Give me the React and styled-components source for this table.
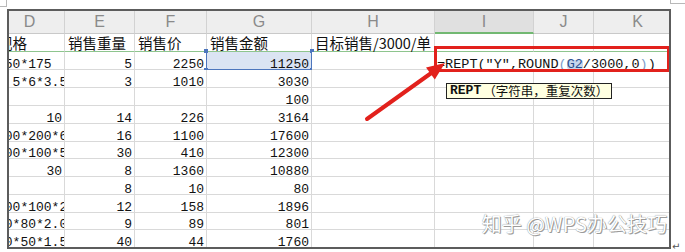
import React from "react";
import styled, { createGlobalStyle } from "styled-components";

const GlobalStyle = createGlobalStyle`
  html, body {
    margin: 0;
    padding: 0;
    background: #fff;
  }
  body {
    width: 685px;
    height: 252px;
    overflow: hidden;
  }
`;

const COLS = [
  { key: "D", w: 70 },
  { key: "E", w: 70 },
  { key: "F", w: 72 },
  { key: "G", w: 105 },
  { key: "H", w: 123 },
  { key: "I", w: 99, active: true },
  { key: "J", w: 60 },
  { key: "K", w: 88 },
];
const template = COLS.map((c) => c.w + "px").join(" ");

const titles = ["规格", "销售重量", "销售价", "销售金额", "目标销售/3000/单", "", "", ""];

const rows = [
  { h: 18, d: "150*175", e: 5, f: 2250, g: 11250, sel: true, formula: true },
  { h: 18, d: "  5*6*3.5", e: 3, f: 1010, g: 3030 },
  { h: 18, g: 100 },
  { h: 18, d: 10, e: 14, f: 226, g: 3164 },
  { h: 18, d: "100*200*6", e: 16, f: 1100, g: 17600 },
  { h: 17, d: "100*100*5", e: 30, f: 410, g: 12300 },
  { h: 18, d: 30, e: 8, f: 1360, g: 10880 },
  { h: 18, e: 8, f: 10, g: 80 },
  { h: 18, d: "100*100*2", e: 12, f: 158, g: 1896 },
  { h: 17, d: "80*80*2.0", e: 9, f: 89, g: 801 },
  { h: 18, d: "50*50*1.5", e: 40, f: 44, g: 1760 },
];

const Page = styled.div`
  width: 685px;
  height: 252px;
  background: #fff;
`;

const TopStrip = styled.div`
  height: 9px;
  display: flex;
  justify-content: space-between;
  align-items: flex-start;
`;

const CornerMark = styled.span`
  box-sizing: border-box;
  display: block;
  width: ${(p) => p.$w}px;
  height: ${(p) => p.$h}px;
  border-bottom: 1px solid #b8b8b8;
  ${(p) =>
    p.$side === "left"
      ? "border-right: 1px solid #b8b8b8;"
      : "border-left: 1px solid #b8b8b8;"}
`;

const FrameRow = styled.div`
  display: flex;
  align-items: flex-end;
  padding-left: 7px;
`;

const Frame = styled.div`
  position: relative;
  box-sizing: border-box;
  width: 664px;
  height: 240px;
  border: 2px solid #5c5c5c;
  overflow: hidden;
  background: #fff;
`;

const ReturnMark = styled.span`
  font-family: "DejaVu Sans", sans-serif;
  font-size: 10px;
  line-height: 10px;
  color: #555;
  margin-left: 1px;
  margin-bottom: -3px;
`;

const Sheet = styled.div`
  margin-left: -14px;
  width: max-content;
`;

const Row = styled.div`
  display: grid;
  grid-template-columns: ${template};
  height: ${(p) => p.$h}px;
`;

const HeadCell = styled.div`
  box-sizing: border-box;
  border-right: 1px solid #d2d2d2;
  border-bottom: ${(p) =>
    p.$active ? "2px solid #72b872" : "1px solid #c9c9c9"};
  background: ${(p) => (p.$active ? "#e0e0e0" : "#eeeeee")};
  display: flex;
  align-items: center;
  justify-content: center;
  font-family: "Liberation Sans", Arial, sans-serif;
  font-size: 16px;
  color: #8a8a8a;
`;

const TitleCell = styled.div`
  box-sizing: border-box;
  border-right: 1px solid #d9d9d9;
  border-bottom: 1px solid #8ec58e;
  padding-left: 3px;
  overflow: ${(p) => (p.$clip ? "hidden" : "visible")};
  white-space: nowrap;
  font-family: "Noto Sans CJK SC", sans-serif;
  font-size: 14.5px;
  line-height: 17px;
  color: #111;
`;

const Cell = styled.div`
  position: relative;
  box-sizing: border-box;
  border-right: 1px solid #d9d9d9;
  border-bottom: 1px solid #d9d9d9;
  padding: 0 2px;
  overflow: ${(p) => (p.$clip ? "hidden" : "visible")};
  white-space: pre;
  display: flex;
  align-items: flex-end;
  justify-content: ${(p) => (p.$num ? "flex-end" : "flex-start")};
  font-family: "Liberation Mono", monospace;
  font-size: 13px;
  line-height: 9px;
  color: #111;
  background: ${(p) => (p.$sel ? "#dbe4f3" : "#fff")};
`;

const EditCell = styled(Cell)`
  grid-column: span 3;
  z-index: 2;
  background: #fff;
  border-right: none;
  font-size: 13.5px;
`;

const SelFrame = styled.span`
  position: absolute;
  left: -1px;
  top: -1px;
  right: -1px;
  bottom: -1px;
  border: 1px solid #4d76bd;
  border-top-color: transparent;
  pointer-events: none;
`;

const Handle = styled.span`
  position: absolute;
  width: 4px;
  height: 4px;
  background: #4d76bd;
  ${(p) => (p.$x === "left" ? "left: -3px;" : "right: -3px;")}
  ${(p) => (p.$y === "top" ? "top: -3px;" : "bottom: -3px;")}
`;

const Paren = styled.span`
  color: #7d9bc9;
`;

const RefTag = styled.span`
  background: #c6d5ec;
  color: #2d4f8e;
  border-radius: 2px;
`;

const RedBox = styled.span`
  position: absolute;
  left: -1px;
  top: -6px;
  width: 236px;
  height: 26px;
  box-sizing: border-box;
  border: 3px solid #e2211c;
  pointer-events: none;
`;

const Tip = styled.div`
  position: absolute;
  left: 11px;
  top: 31px;
  box-sizing: border-box;
  height: 16px;
  padding: 0 3px;
  border: 1px solid #222;
  background: #ffffe1;
  display: flex;
  align-items: center;
  white-space: nowrap;
  font-family: "Noto Sans CJK SC", sans-serif;
  font-size: 12.5px;
  line-height: 14px;
  color: #111;
`;

const TipName = styled.b`
  font-family: "Liberation Mono", monospace;
  font-size: 13px;
  margin-right: 2px;
`;

const Arrow = styled.svg`
  position: absolute;
  left: 350px;
  top: 44px;
  overflow: visible;
  z-index: 3;
  pointer-events: none;
`;

const Watermark = styled.div`
  position: absolute;
  right: 2px;
  bottom: 12px;
  font-family: "Noto Sans CJK SC", sans-serif;
  font-size: 20px;
  line-height: 22px;
  color: #fff;
  white-space: nowrap;
  text-shadow: 0 0 1px #6f6f6f, 1px 1px 0 #a0a0a0;
`;

const isNum = (v) => typeof v === "number";

const App = () => {
  return (
    <Page>
      <GlobalStyle />
      <TopStrip>
        <CornerMark $side="left" $w={7} $h={7} />
        <CornerMark $side="right" $w={15} $h={4} />
      </TopStrip>
      <FrameRow>
        <Frame>
          <Sheet>
            <Row $h={23}>
              {COLS.map((c) => (
                <HeadCell key={c.key} $active={c.active}>
                  {c.key}
                </HeadCell>
              ))}
            </Row>
            <Row $h={18}>
              {titles.map((t, i) => (
                <TitleCell key={i} $clip={i === 0}>
                  {t}
                </TitleCell>
              ))}
            </Row>
            {rows.map((r, i) => (
              <Row $h={r.h} key={i}>
                <Cell $num={isNum(r.d)} $clip={!isNum(r.d)}>
                  {r.d}
                </Cell>
                <Cell $num>{r.e}</Cell>
                <Cell $num>{r.f}</Cell>
                <Cell $num $sel={r.sel}>
                  {r.g}
                  {r.sel && (
                    <>
                      <SelFrame />
                      <Handle $x="left" $y="top" />
                      <Handle $x="left" $y="bottom" />
                      <Handle $x="right" $y="top" />
                      <Handle $x="right" $y="bottom" />
                    </>
                  )}
                </Cell>
                <Cell />
                {r.formula ? (
                  <EditCell>
                    =REPT("Y",ROUND<Paren>(</Paren>
                    <RefTag>G2</RefTag>/3000,0<Paren>)</Paren>)
                    <RedBox />
                    <Tip>
                      <TipName>REPT</TipName>（字符串，重复次数）
                    </Tip>
                  </EditCell>
                ) : (
                  <>
                    <Cell />
                    <Cell />
                    <Cell />
                  </>
                )}
              </Row>
            ))}
          </Sheet>
          <Arrow width="100" height="75" viewBox="0 0 100 75">
            <line
              x1="8"
              y1="64"
              x2="73"
              y2="17.5"
              stroke="#e2211c"
              strokeWidth="4"
              strokeLinecap="round"
            />
            <polygon points="86,8 75.8,24.6 67,12.4" fill="#e2211c" />
          </Arrow>
          <Watermark>知乎 @WPS办公技巧</Watermark>
        </Frame>
        <ReturnMark>↵</ReturnMark>
      </FrameRow>
    </Page>
  );
};

export default App;
